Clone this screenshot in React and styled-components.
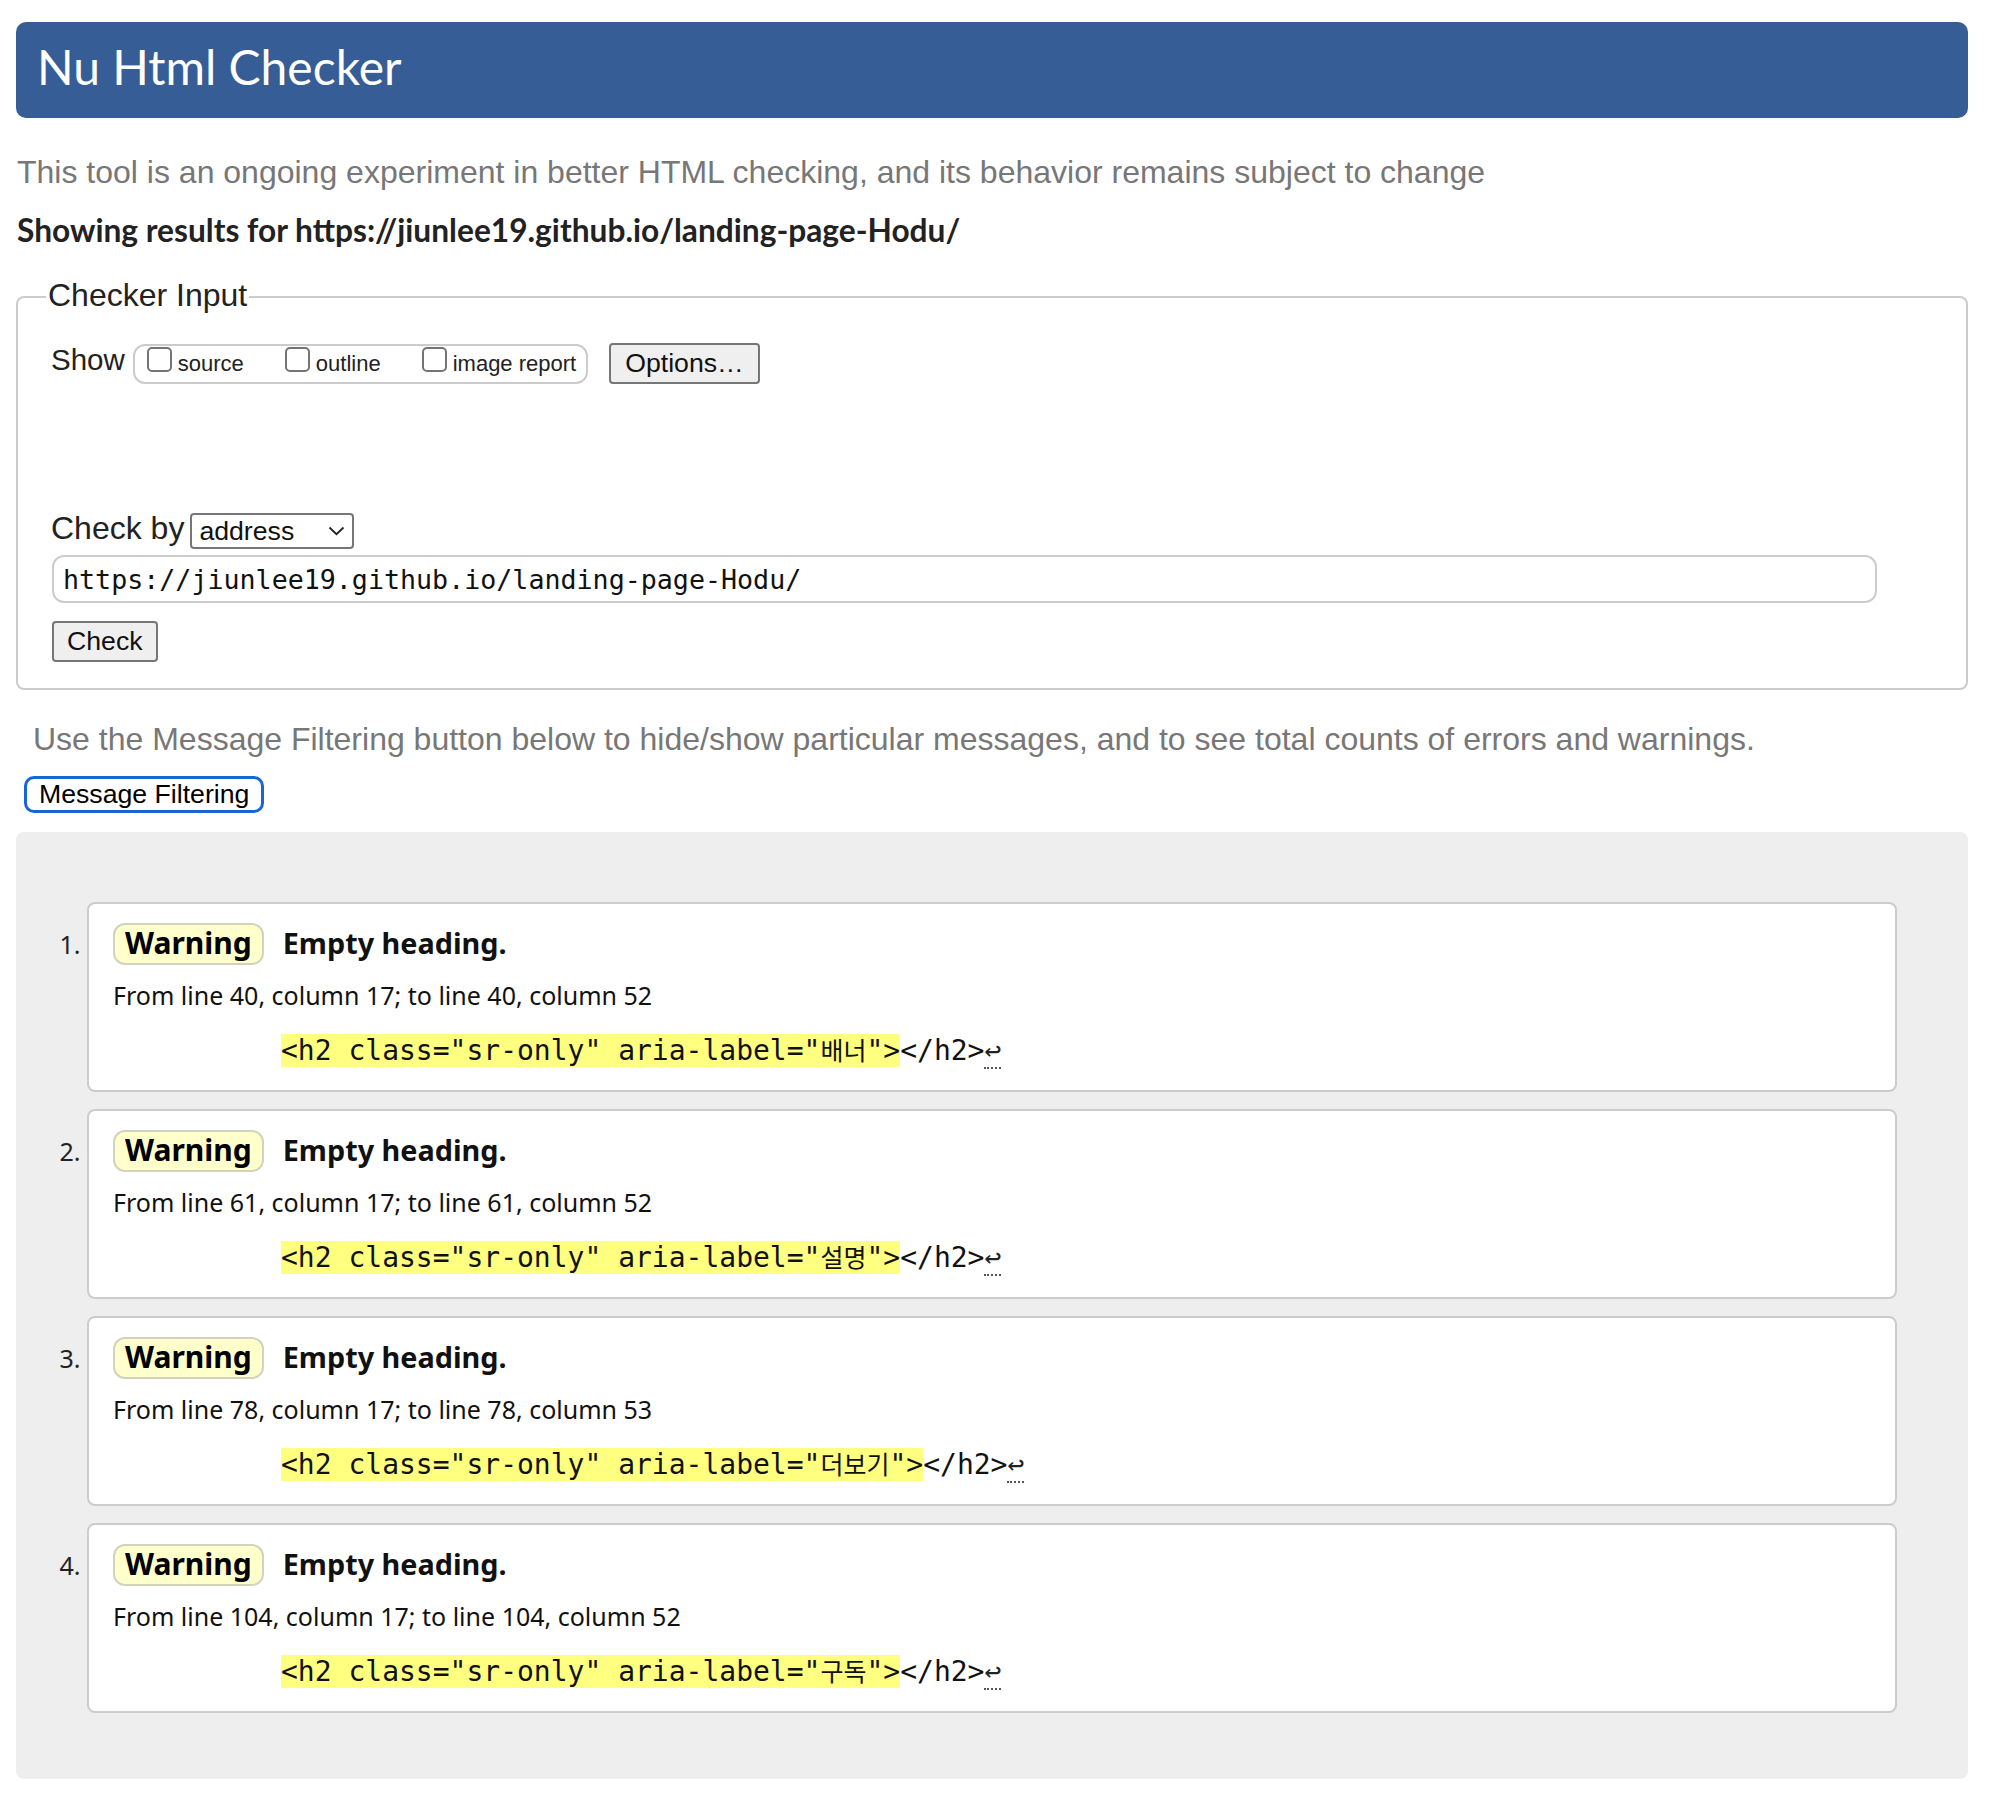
import React from "react";
import styled, { createGlobalStyle } from "styled-components";

const GlobalStyle = createGlobalStyle`
  html, body { margin: 0; padding: 0; background: #fff; }
  body { font-family: "Liberation Sans", Arial, sans-serif; color: #222; }
  * { box-sizing: border-box; }
`;

const Page = styled.div`
  padding: 22px 24px 23px 16px;
`;

const Header = styled.h1`
  margin: 0;
  height: 96px;
  padding: 0 0 6px 21px;
  line-height: 90px;
  background: #365d95;
  border-radius: 10px;
  color: #fff;
  font-family: Lato, "Noto Sans", sans-serif;
  font-weight: 400;
  font-size: 48px;
`;

const Intro = styled.p`
  margin: ${(p) => p.$mt}px 0 0 ${(p) => p.$ml}px;
  font-size: 32px;
  line-height: 40px;
  color: #777;
`;

const Showing = styled.p`
  margin: 18px 0 0 1px;
  font-family: Lato, "Noto Sans", sans-serif;
  font-weight: 700;
  font-size: 31.7px;
  line-height: 40px;
  color: #222;
`;

const Fieldset = styled.fieldset`
  margin: 28px 0 0;
  padding: 27px 35px 26px 34px;
  border: 2px solid #ccc;
  border-radius: 8px;
  min-width: 0;
`;

const Legend = styled.legend`
  margin-left: -6px;
  padding: 0 2px 4px;
  font-size: 32px;
  line-height: 34px;
  color: #222;
`;

const ShowRow = styled.div`
  display: flex;
  align-items: flex-start;
  height: 41px;
`;

const ShowLabel = styled.span`
  font-size: 29.5px;
  line-height: 34px;
  margin: 0 8px 0 -1px;
`;

const OptionGroup = styled.div`
  display: flex;
  align-items: flex-start;
  gap: 41px;
  height: 40px;
  margin-top: 1px;
  padding: 0 10px 0 12px;
  border: 2px solid #ccc;
  border-radius: 12px;
`;

const OptionItem = styled.label`
  display: flex;
  align-items: flex-start;
  gap: 6px;
`;

const Box = styled.input`
  appearance: none;
  -webkit-appearance: none;
  margin: 1px 0 0;
  width: 25px;
  height: 25px;
  border: 2px solid #747474;
  border-radius: 5px;
  background: #fff;
`;

const OptionText = styled.span`
  font-size: 22px;
  line-height: 26px;
  margin-top: 5px;
  color: #222;
`;

const Button = styled.button`
  height: 41px;
  margin: ${(p) => p.$mt || 0}px 0 0 ${(p) => p.$ml || 0}px;
  padding: 0 ${(p) => p.$px}px;
  font-family: "Liberation Sans", Arial, sans-serif;
  font-size: 26.67px;
  color: #111;
  background: #efefef;
  border: 2px solid #767676;
  border-radius: 4px;
  display: block;
`;

const CheckByRow = styled.div`
  display: flex;
  align-items: flex-start;
  margin-top: 129px;
`;

const CheckByLabel = styled.span`
  font-size: 32px;
  line-height: 30px;
  margin: 0 6px 0 -1px;
`;

const SelectBox = styled.div`
  width: 164px;
  height: 36px;
  border: 2px solid #767676;
  border-radius: 4px;
  display: flex;
  align-items: center;
  justify-content: space-between;
  padding: 0 7px 0 7px;
  font-size: 26.67px;
  line-height: 32px;
  color: #111;
  background: #fff;
`;

const UrlInput = styled.input`
  display: block;
  margin-top: 6px;
  width: 1825px;
  height: 48px;
  padding: 0 9px;
  border: 2px solid #ccc;
  border-radius: 12px;
  font-family: "DejaVu Sans Mono", monospace;
  font-size: 26.67px;
  color: #111;
  outline: none;
`;

const FilterButton = styled.button`
  display: block;
  height: 37px;
  margin: 17px 0 0 8px;
  padding: 0 12px;
  background: #fff;
  border: 3px solid #1766d6;
  border-radius: 10px;
  font-family: "Liberation Sans", Arial, sans-serif;
  font-size: 26.67px;
  color: #000;
`;

const Panel = styled.div`
  margin-top: 19px;
  background: #eee;
  border-radius: 8px;
  padding: 70px 71px 66px 71px;
`;

const List = styled.ol`
  margin: 0;
  padding: 0;
  list-style: decimal outside;
`;

const Card = styled.li`
  background: #fff;
  border: 2px solid #ccc;
  border-radius: 8px;
  padding: 19px 24px 23px;
  margin-bottom: 17px;
  font-family: "Noto Sans", sans-serif;
  font-size: 25px;
  color: #111;
  &:last-child { margin-bottom: 0; }
  &::marker { color: #222; }
`;

const TitleRow = styled.div`
  display: flex;
  align-items: baseline;
  gap: 19px;
  height: 42px;
`;

const Badge = styled.strong`
  display: inline-block;
  background: #ffffcc;
  border: 2px solid #d2d2bf;
  border-radius: 12px;
  padding: 1px 10px 3px;
  line-height: 34px;
  font-size: 30px;
  font-weight: 700;
  color: #000;
`;

const Title = styled.strong`
  font-size: 28.8px;
  font-weight: 700;
  color: #111;
`;

const Location = styled.p`
  margin: 13px 0 0;
  line-height: 34px;
`;

const Extract = styled.p`
  margin: 21px 0 0 168px;
  font-family: "DejaVu Sans Mono", monospace;
  font-size: 28px;
  line-height: 33px;
  color: #111;
  white-space: pre;
`;

const Hl = styled.b`
  font-weight: 400;
  background: #ffff80;
`;

const Ko = styled.span`
  font-family: "Noto Sans CJK KR", sans-serif;
  font-size: 25px;
`;

const Lf = styled.span`
  border-bottom: 2px dotted #555;
  color: #222;
`;

const messages = [
  { from: "40", col: "52", label: "배너" },
  { from: "61", col: "52", label: "설명" },
  { from: "78", col: "53", label: "더보기" },
  { from: "104", col: "52", label: "구독" },
];

const Chevron = () => (
  <svg width="17" height="10" viewBox="0 0 17 10">
    <polyline points="1.5,1.5 8.5,8.2 15.5,1.5" fill="none" stroke="#222" strokeWidth="1.8" />
  </svg>
);

export default function App() {
  return (
    <>
      <GlobalStyle />
      <Page>
        <Header>Nu Html Checker</Header>
        <Intro $mt={34} $ml={1}>
          This tool is an ongoing experiment in better HTML checking, and its behavior remains subject to change
        </Intro>
        <Showing>Showing results for https://jiunlee19.github.io/landing-page-Hodu/</Showing>
        <Fieldset>
          <Legend>Checker Input</Legend>
          <ShowRow>
            <ShowLabel>Show</ShowLabel>
            <OptionGroup>
              <OptionItem>
                <Box type="checkbox" />
                <OptionText>source</OptionText>
              </OptionItem>
              <OptionItem>
                <Box type="checkbox" />
                <OptionText>outline</OptionText>
              </OptionItem>
              <OptionItem>
                <Box type="checkbox" />
                <OptionText>image report</OptionText>
              </OptionItem>
            </OptionGroup>
            <Button $px={14} $ml={21}>Options…</Button>
          </ShowRow>
          <CheckByRow>
            <CheckByLabel>Check by</CheckByLabel>
            <SelectBox>
              <span>address</span>
              <Chevron />
            </SelectBox>
          </CheckByRow>
          <UrlInput readOnly defaultValue="https://jiunlee19.github.io/landing-page-Hodu/" />
          <Button $px={13} $mt={18}>Check</Button>
        </Fieldset>
        <Intro $mt={29} $ml={17}>
          Use the Message Filtering button below to hide/show particular messages, and to see total counts of errors and warnings.
        </Intro>
        <FilterButton>Message Filtering</FilterButton>
        <Panel>
          <List>
            {messages.map((m) => (
              <Card key={m.from}>
                <TitleRow>
                  <Badge>Warning</Badge>
                  <Title>Empty heading.</Title>
                </TitleRow>
                <Location>
                  From line {m.from}, column 17; to line {m.from}, column {m.col}
                </Location>
                <Extract>
                  <Hl>
                    {'<h2 class="sr-only" aria-label="'}
                    <Ko>{m.label}</Ko>
                    {'">'}
                  </Hl>
                  {"</h2>"}
                  <Lf>↩</Lf>
                </Extract>
              </Card>
            ))}
          </List>
        </Panel>
      </Page>
    </>
  );
}
